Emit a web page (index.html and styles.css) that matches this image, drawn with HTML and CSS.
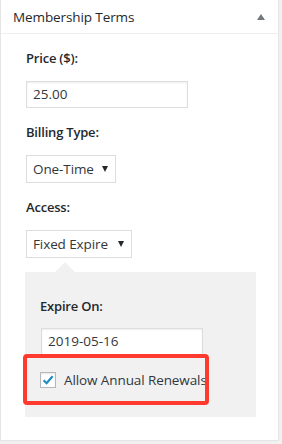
FILE: index.html
```html
<!DOCTYPE html>
<html lang="en">
<head>
    <meta charset="UTF-8">
    <title>Membership Terms</title>
    <link rel="stylesheet" href="styles.css">
</head>
<body>
    <div class="postbox">
        <div class="postbox-header">
            <h2 class="postbox-title">Membership Terms</h2>
            <span class="toggle-arrow"></span>
        </div>
        <div class="inside">
            <div class="field">
                <label class="field-label">Price ($):</label>
                <div class="text-input price-input">25.00</div>
            </div>
            <div class="field">
                <label class="field-label">Billing Type:</label>
                <div class="select-box billing-select">One-Time <span class="select-arrow"></span></div>
            </div>
            <div class="field">
                <label class="field-label">Access:</label>
                <div class="select-box access-select">Fixed Expire <span class="select-arrow"></span></div>
            </div>
            <div class="expire-panel">
                <span class="panel-notch"></span>
                <label class="field-label">Expire On:</label>
                <div class="text-input date-input">2019-05-16</div>
                <div class="checkbox-row">
                    <span class="checkbox">
                        <svg width="14" height="14" viewBox="0 0 14 14">
                            <path d="M2.6 7.2 L5.6 10.2 L11.6 3.2" fill="none" stroke="#1e8cbe" stroke-width="2.2"/>
                        </svg>
                    </span>
                    <span class="checkbox-text">Allow Annual Renewals</span>
                    <span class="highlight-box"></span>
                </div>
            </div>
        </div>
    </div>
</body>
</html>
```

FILE: styles.css
```css
body {
    margin: 0;
    background-color: #f1f1f1;
    font-family: 'Open Sans', sans-serif;
    color: #23282d;
}
.postbox {
    width: 277px;
    height: 440px;
    background: white;
    border: 1px solid #e5e5e5;
    border-top: none;
    box-sizing: content-box;
}
.postbox-header {
    height: 33px;
    border-bottom: 1px solid #eeeeee;
    display: flex;
    align-items: center;
    justify-content: space-between;
    padding: 0 13px 0 12px;
}
.postbox-title {
    margin: 0;
    font-size: 13.5px;
    font-weight: 400;
    letter-spacing: -0.1px;
}
.toggle-arrow {
    width: 0;
    height: 0;
    border-left: 4.5px solid transparent;
    border-right: 4.5px solid transparent;
    border-bottom: 6px solid #72777c;
    margin-top: 0;
}
.inside {
    padding: 14px 0 0 25px;
}
.field {
    margin-bottom: 14px;
}
.field-label {
    display: block;
    font-size: 13px;
    font-weight: 600;
    line-height: 20px;
    margin-bottom: 13px;
    letter-spacing: -0.2px;
}
.text-input {
    box-sizing: border-box;
    border: 1px solid #dddddd;
    box-shadow: inset 0 1px 2px rgba(0, 0, 0, 0.07);
    background: white;
    color: #32373c;
    font-size: 13.5px;
    height: 27px;
    line-height: 25px;
    padding-left: 6px;
}
.price-input {
    width: 162px;
}
.select-box {
    box-sizing: border-box;
    display: flex;
    align-items: center;
    justify-content: space-between;
    border: 1px solid #dddddd;
    height: 28px;
    padding: 0 7px 0 6px;
    font-size: 13.5px;
    color: #32373c;
    letter-spacing: -0.1px;
}
.billing-select {
    width: 90px;
}
.access-select {
    width: 106px;
}
.select-arrow {
    width: 0;
    height: 0;
    border-left: 3.5px solid transparent;
    border-right: 3.5px solid transparent;
    border-top: 6px solid #23282d;
}
.expire-panel {
    position: relative;
    width: 231px;
    height: 145px;
    box-sizing: border-box;
    margin-top: 0;
    margin-left: -1px;
    background: #f1f1f1;
    padding: 24px 0 0 15px;
}
.expire-panel .field-label {
    margin-bottom: 12px;
}
.panel-notch {
    position: absolute;
    top: -10px;
    left: 30px;
    width: 0;
    height: 0;
    border-left: 10px solid transparent;
    border-right: 10px solid transparent;
    border-bottom: 10px solid #f1f1f1;
}
.date-input {
    width: 162px;
    margin-left: 1px;
    height: 28px;
}
.checkbox-row {
    position: relative;
    display: flex;
    align-items: center;
    margin-top: 16px;
    height: 16px;
}
.checkbox {
    box-sizing: border-box;
    width: 16px;
    height: 16px;
    border: 1px solid #b4b9be;
    background: white;
    box-shadow: inset 0 1px 2px rgba(0, 0, 0, 0.1);
    display: flex;
    align-items: center;
    justify-content: center;
}
.checkbox-text {
    margin-left: 8px;
    font-size: 13.5px;
    color: #32373c;
    letter-spacing: -0.1px;
}
.highlight-box {
    position: absolute;
    left: -17px;
    top: -18px;
    width: 186px;
    height: 51px;
    box-sizing: border-box;
    border: 4px solid #ff3b2f;
    border-radius: 4px;
}
```
